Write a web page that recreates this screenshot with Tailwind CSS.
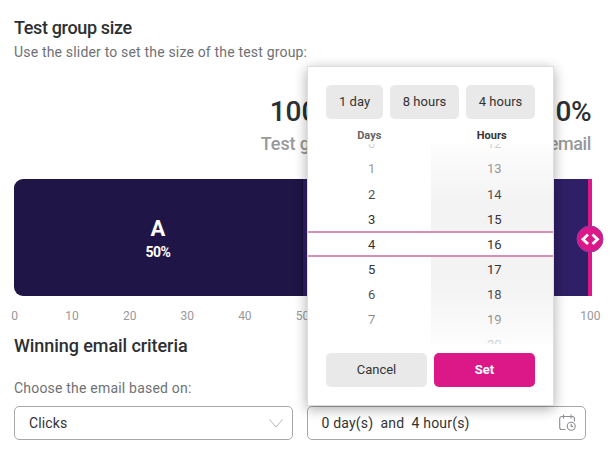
<!DOCTYPE html>
<html lang="en">
<head>
  <meta charset="UTF-8">
  <meta name="viewport" content="width=device-width, initial-scale=1.0">
  <title>A/B test settings</title>
  <script src="https://cdn.jsdelivr.net/npm/@tailwindcss/browser@4"></script>
</head>
<body class="bg-white h-[467px] overflow-hidden font-[Roboto,sans-serif] text-[#333]">
  <main class="pl-3.5 pr-6 pt-4">
    <h2 class="h-6 leading-6 text-lg font-medium tracking-[-0.35px] whitespace-nowrap text-[#2d3033]">Test group size</h2>
    <p class="h-6 leading-6 text-sm tracking-[0.18px] text-[#6f7174]">Use the slider to set the size of the test group:</p>

    <div class="mt-8 h-[83px] w-[577px] flex justify-between">
      <div class="w-[332px] text-right">
        <div class="h-8 leading-8 pr-2 text-[28px] font-medium text-[#2d3033]">100%</div>
        <div class="h-8 leading-8 text-lg font-medium tracking-[-0.1px] text-[#97999b]">Test group</div>
      </div>
      <div class="w-[150px] text-right">
        <div class="h-8 leading-8 text-[28px] font-medium tracking-[-0.5px] text-[#2d3033]">0%</div>
        <div class="h-8 leading-8 text-lg font-medium tracking-[-0.4px] text-[#97999b]">Winning email</div>
      </div>
    </div>

    <!-- slider -->
    <div class="relative w-[578px] h-[117px] flex">
      <div class="w-[288px] rounded-l-[9px] bg-[#201547] text-white flex flex-col items-center pt-9">
        <div class="h-7 leading-7 text-[22px] font-bold">A</div>
        <div class="h-5 leading-[18px] text-sm font-bold tracking-[-0.5px]">50%</div>
      </div>
      <div class="flex-1 bg-[#2f1f66] border-l border-[#170e38]"></div>
      <div class="w-1 bg-[#dc1888]"></div>
      <svg class="absolute left-[562px] top-[46px]" width="28" height="28" viewBox="0 0 28 28" fill="none">
        <circle cx="14" cy="14" r="13" fill="#dc1888" stroke="#8f3aa5" stroke-width="1"/>
        <path d="M12 9.5L7 14.2L12 19M16.5 9.5L21.5 14.2L16.5 19" stroke="#fff" stroke-width="2.8"/>
      </svg>
    </div>
    <div class="-ml-[14.5px] mt-2.5 h-5 leading-5 flex text-xs text-[#97999b] text-center">
      <span class="w-[30px] mr-[27.6px] shrink-0">0</span>
      <span class="w-[30px] mr-[27.6px] shrink-0">10</span>
      <span class="w-[30px] mr-[27.6px] shrink-0">20</span>
      <span class="w-[30px] mr-[27.6px] shrink-0">30</span>
      <span class="w-[30px] mr-[27.6px] shrink-0">40</span>
      <span class="w-[30px] mr-[27.6px] shrink-0">50</span>
      <span class="w-[30px] mr-[27.6px] shrink-0">60</span>
      <span class="w-[30px] mr-[27.6px] shrink-0">70</span>
      <span class="w-[30px] mr-[27.6px] shrink-0">80</span>
      <span class="w-[30px] mr-[27.6px] shrink-0">90</span>
      <span class="w-[30px] shrink-0">100</span>
    </div>

    <h2 class="mt-2 h-6 leading-6 text-lg font-medium tracking-[-0.07px] whitespace-nowrap text-[#2d3033]">Winning email criteria</h2>
    <p class="mt-[18px] h-6 leading-6 text-sm tracking-[0.2px] text-[#6f7174]">Choose the email based on:</p>

    <div class="mt-1.5 flex gap-3.5">
      <div class="w-[279px] h-[34px] shrink-0 border border-[#a5a7a9] rounded-[5px] flex items-center justify-between pl-3.5 pr-[9px]">
        <span class="text-sm tracking-[0.15px]">Clicks</span>
        <svg width="14" height="9" viewBox="0 0 14 9" fill="none" stroke="#b4b6b8"><path d="M0.5 0.5L7 8L13.5 0.5"/></svg>
      </div>

      <div class="relative w-[279px] shrink-0">
        <div class="h-[34px] border border-[#a5a7a9] rounded-[5px] flex items-center justify-between pl-[13.5px] pr-[9px]">
          <span class="text-sm tracking-[0.18px] whitespace-pre">0 day(s)  and  4 hour(s)</span>
          <svg class="-mt-0.5" width="17" height="17" viewBox="0 0 17 17" fill="none" stroke="#8b8d90" stroke-width="1.1">
            <path d="M6.5 15.5H3A2.3 2.3 0 0 1 .7 13.2V4.8A2.3 2.3 0 0 1 3 2.5H13.2A2.3 2.3 0 0 1 15.5 4.8V7.5M4.5 .5V4.5M12 .5V4.5"/>
            <circle cx="12.2" cy="12.2" r="4"/>
            <path d="M12.2 9.8V12.4H14"/>
          </svg>
        </div>

        <!-- duration picker -->
        <div class="absolute left-0 bottom-[34px] w-[247px] h-[340px] bg-white border border-[#dedede] shadow-[0_3px_12px_rgba(0,0,0,0.33)] pt-[18px]">
          <div class="px-[18px] flex gap-[7px] text-[13px] tracking-[0.05px]">
            <button class="w-[57px] h-[34px] rounded-[5px] bg-[#e9e9e9]">1 day</button>
            <button class="w-[69px] h-[34px] rounded-[5px] bg-[#e9e9e9]">8 hours</button>
            <button class="w-[69px] h-[34px] rounded-[5px] bg-[#e9e9e9]">4 hours</button>
          </div>
          <div class="mt-2 h-[17px] leading-[17px] flex text-[11px] font-bold text-center">
            <span class="flex-1 text-[#666]">Days</span>
            <span class="flex-1">Hours</span>
          </div>
          <div class="relative h-[200px] overflow-hidden text-center text-[13px]">
            <div class="-mt-[12.8px] flex leading-[25.15px]">
              <div class="flex-1 pl-[5px]">
                <div>0</div>
                <div>1</div>
                <div>2</div>
                <div>3</div>
                <div>4</div>
                <div>5</div>
                <div>6</div>
                <div>7</div>
              </div>
              <div class="flex-1 pl-[5px] bg-[#f3f3f3]">
                <div>12</div>
                <div>13</div>
                <div>14</div>
                <div>15</div>
                <div class="-ml-[5px] pl-[5px] bg-white">16</div>
                <div>17</div>
                <div>18</div>
                <div>19</div>
                <div>20</div>
              </div>
            </div>
            <div class="absolute inset-x-0 top-0 h-[60px] bg-linear-to-b from-white/80 to-white/0"></div>
            <div class="absolute inset-x-0 bottom-0 h-[60px] bg-linear-to-t from-white/80 to-white/0"></div>
            <div class="absolute inset-x-0 top-[87px] h-[26px] border-y-2 border-[#d690b8]"></div>
          </div>
          <div class="mt-[9px] px-[18px] flex gap-[7px] text-[13px]">
            <button class="w-[101px] h-[34px] rounded-[5px] bg-[#e9e9e9]">Cancel</button>
            <button class="w-[101px] h-[34px] rounded-[5px] bg-[#dc1888] text-white font-bold">Set</button>
          </div>
        </div>
      </div>
    </div>
  </main>
</body>
</html>
